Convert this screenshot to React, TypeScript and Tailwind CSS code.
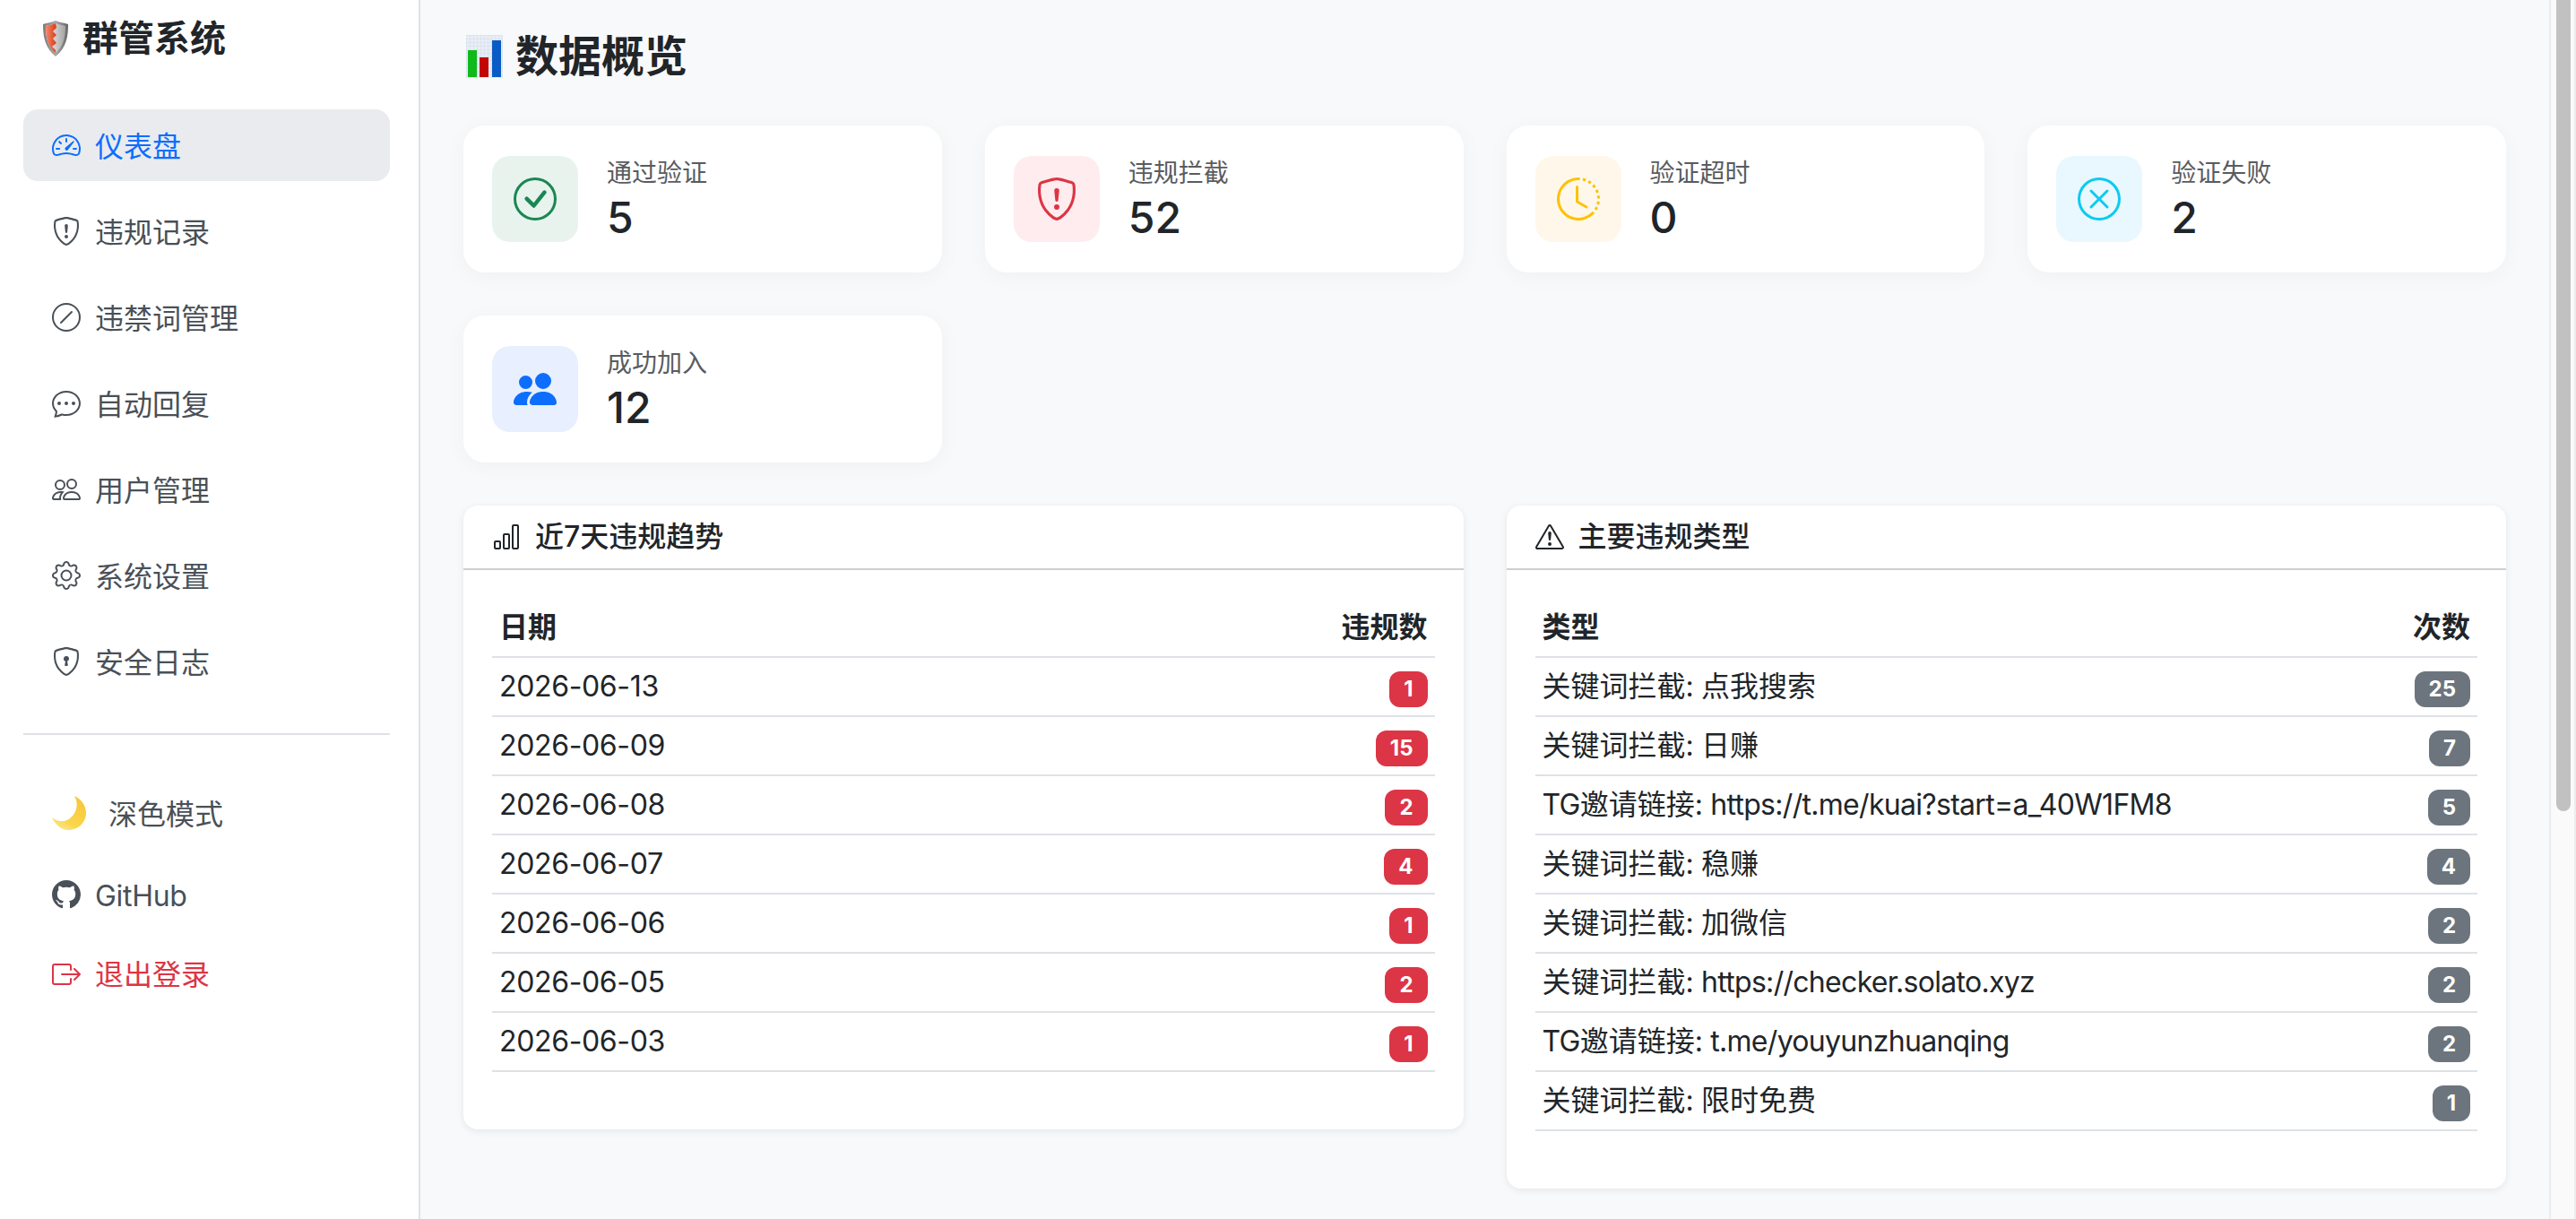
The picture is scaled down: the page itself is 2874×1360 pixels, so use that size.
import type { ReactNode } from "react";
import {
  BsBarChart,
  BsBoxArrowRight,
  BsChatDots,
  BsCheckCircle,
  BsClockHistory,
  BsExclamationTriangle,
  BsGear,
  BsGithub,
  BsPeople,
  BsPeopleFill,
  BsShieldExclamation,
  BsShieldLock,
  BsSlashCircle,
  BsSpeedometer2,
  BsXCircle,
} from "react-icons/bs";

const navItems = [
  { label: "仪表盘", icon: BsSpeedometer2, active: true },
  { label: "违规记录", icon: BsShieldExclamation },
  { label: "违禁词管理", icon: BsSlashCircle },
  { label: "自动回复", icon: BsChatDots },
  { label: "用户管理", icon: BsPeople },
  { label: "系统设置", icon: BsGear },
  { label: "安全日志", icon: BsShieldLock },
];

const stats = [
  { label: "通过验证", value: 5, icon: BsCheckCircle, box: "bg-[#e9f3ee] text-[#198754]" },
  { label: "违规拦截", value: 52, icon: BsShieldExclamation, box: "bg-[#feecee] text-[#dc3545]" },
  { label: "验证超时", value: 0, icon: BsClockHistory, box: "bg-[#fff8ea] text-[#ffc107]" },
  { label: "验证失败", value: 2, icon: BsXCircle, box: "bg-[#e9f8fe] text-[#0dcaf0]" },
  { label: "成功加入", value: 12, icon: BsPeopleFill, box: "bg-[#e8effe] text-[#0d6efd]" },
];

const trend = [
  ["2026-06-13", 1],
  ["2026-06-09", 15],
  ["2026-06-08", 2],
  ["2026-06-07", 4],
  ["2026-06-06", 1],
  ["2026-06-05", 2],
  ["2026-06-03", 1],
] as const;

const topTypes = [
  ["关键词拦截: 点我搜索", 25],
  ["关键词拦截: 日赚", 7],
  ["TG邀请链接: https://t.me/kuai?start=a_40W1FM8", 5],
  ["关键词拦截: 稳赚", 4],
  ["关键词拦截: 加微信", 2],
  ["关键词拦截: https://checker.solato.xyz", 2],
  ["TG邀请链接: t.me/youyunzhuanqing", 2],
  ["关键词拦截: 限时免费", 1],
] as const;

// latin runs sit a little tighter than the CJK around them
const Tight = ({ text }: { text: string }) => (
  <>
    {text.split(/([\x21-\x7e]+)/).map((part, i) =>
      i % 2 ? (
        <span key={i} className={part.startsWith("2026") ? "tracking-[-0.35px]" : "tracking-[-0.7px]"}>
          {part}
        </span>
      ) : (
        part
      ),
    )}
  </>
);

const ShieldEmoji = () => (
  <svg viewBox="0 0 28 40" className="w-[28px] h-[40px] shrink-0">
    <defs>
      <linearGradient id="rim" x1="0" y1="0" x2="1" y2="0">
        <stop offset="0" stopColor="#7d7d7d" />
        <stop offset="0.5" stopColor="#a8a8a8" />
        <stop offset="1" stopColor="#666666" />
      </linearGradient>
      <linearGradient id="metal" x1="0" y1="0" x2="1" y2="0">
        <stop offset="0" stopColor="#f5f5f5" />
        <stop offset="1" stopColor="#a4a4a4" />
      </linearGradient>
      <linearGradient id="paint" x1="0" y1="0" x2="1" y2="0">
        <stop offset="0" stopColor="#f78a6c" />
        <stop offset="1" stopColor="#d93a17" />
      </linearGradient>
    </defs>
    <path d="M14 0C18 2 24 2.5 28 4C28 18 26 30 14 40C2 30 0 18 0 4C4 2.5 10 2 14 0Z" fill="url(#rim)" />
    <path d="M14 3C18 4.500 22 5 25 6C25 18 23 28 14 36C5 28 3 18 3 6C6 5 10 4.500 14 3Z" fill="url(#metal)" />
    <path d="M14 3C11 4.500 6 5 3 6C3 18 5 28 14 36L14 33L10 29L15 25L11 20L15 16L11 12L15 8Z" fill="url(#paint)" />
  </svg>
);

const ChartEmoji = () => (
  <svg viewBox="0 0 41 48" className="w-[41px] h-[48px] shrink-0 ml-[3px]">
    <defs>
      <pattern id="grid" width="4" height="4" patternUnits="userSpaceOnUse">
        <rect width="4" height="4" fill="#e9eef5" />
        <path d="M0 0H4M0 0V4" stroke="#d3dde9" strokeWidth="1" />
      </pattern>
    </defs>
    <rect width="41" height="48" fill="url(#grid)" />
    <rect x="2" y="17" width="10" height="30" fill="#0fbb1a" />
    <rect x="15" y="25" width="10" height="22" fill="#c20505" />
    <rect x="29" y="6" width="10" height="41" fill="#0a5cc4" />
  </svg>
);

const MoonEmoji = () => (
  <svg viewBox="0 0 38 38" className="w-[38px] h-[38px] shrink-0">
    <defs>
      <linearGradient id="moon" x1="0.8" y1="0" x2="0.3" y2="1">
        <stop offset="0" stopColor="#f5c63b" />
        <stop offset="0.75" stopColor="#fbd64a" />
        <stop offset="1" stopColor="#fbe58e" />
      </linearGradient>
    </defs>
    <path d="M25 0C34 4 38 12 38 19C38 30 29 38 18 38C10 38 4 32 0 24C6 29 14 30 20 25C28 19 30 8 25 0Z" fill="url(#moon)" />
  </svg>
);

const Panel = ({ icon, title, children }: { icon: ReactNode; title: string; children: ReactNode }) => (
  <div className="bg-white rounded-2xl shadow-[0_2px_8px_rgba(0,0,0,0.08)] overflow-hidden">
    <div className="flex items-center gap-4 h-[72px] px-8 border-b-2 border-[#cfcfcf] text-[32px] font-medium text-[#212529]">
      {icon}
      <span>{title}</span>
    </div>
    <div className="p-8">{children}</div>
  </div>
);

const CountTable = ({ head, rows, badge }: { head: [string, string]; rows: readonly (readonly [string, number])[]; badge: string }) => (
  <table className="w-full border-collapse mb-8 text-[32px] leading-[48px] text-[#212529]">
    <thead>
      <tr className="border-b-2 border-[#dee2e6]">
        <th className="p-2 text-left font-semibold">{head[0]}</th>
        <th className="p-2 text-right font-semibold">{head[1]}</th>
      </tr>
    </thead>
    <tbody>
      {rows.map(([name, count], i) => (
        <tr key={i} className="border-b-2 border-[#dee2e6]">
          <td className="p-2">
            <Tight text={name} />
          </td>
          <td className="p-2 text-right">
            <span className={`inline-block rounded-xl px-4 py-[8.4px] text-[24px] font-bold leading-none text-white ${badge}`}>
              {count}
            </span>
          </td>
        </tr>
      ))}
    </tbody>
  </table>
);

export default function App() {
  return (
    <div className="flex h-[1360px] overflow-hidden bg-[#f8f9fa] font-['Inter','Noto_Sans_CJK_SC',sans-serif]">
      {/* Sidebar */}
      <aside className="w-[469px] shrink-0 bg-white border-r-2 border-[#dee2e6] px-[26px]">
        <div className="flex items-center gap-4 pl-[22px] pt-[19px] h-[67px] mb-[55px] text-[40px] leading-[48px] font-bold text-[#212529]">
          <ShieldEmoji />
          <span>群管系统</span>
        </div>
        <nav className="flex flex-col gap-4 w-[409px]">
          {navItems.map((item) => (
            <a
              key={item.label}
              className={`flex items-center gap-4 h-[80px] px-8 rounded-2xl text-[32px] ${
                item.active ? "bg-[#e9ebef] text-[#0d6efd]" : "text-[#495057]"
              }`}
            >
              <item.icon className="w-8 h-8 shrink-0" />
              <span className="translate-y-[2px]">{item.label}</span>
            </a>
          ))}
        </nav>
        <div className="w-[409px] h-[2px] bg-[#dee2e6] mt-10" />
        <div className="flex items-center gap-[25px] h-[80px] px-8 mt-[47px] text-[32px] text-[#495057]">
          <MoonEmoji />
          <span className="translate-y-[2px]">深色模式</span>
        </div>
        <div className="flex items-center gap-4 h-[80px] px-8 mt-[11px] text-[32px] text-[#495057]">
          <BsGithub className="w-8 h-8 shrink-0" />
          <span className="translate-y-[2px] tracking-[-0.3px]">GitHub</span>
        </div>
        <div className="flex items-center gap-4 h-[80px] px-8 mt-[9px] text-[32px] text-[#dc3545]">
          <BsBoxArrowRight className="w-8 h-8 shrink-0" />
          <span className="translate-y-px">退出登录</span>
        </div>
      </aside>

      {/* Main */}
      <main className="flex-1 min-w-0 px-12 pt-[34px]">
        <h1 className="flex items-center gap-[14px] mb-12 text-[48px] leading-[58px] font-bold text-[#212529]">
          <ChartEmoji />
          <span>数据概览</span>
        </h1>

        <div className="grid grid-cols-4 gap-12 mb-12">
          {stats.map((s) => (
            <div key={s.label} className="flex items-center gap-8 p-8 bg-white rounded-3xl shadow-[0_4px_24px_rgba(0,0,0,0.04)]">
              <div className={`flex items-center justify-center w-24 h-24 rounded-[20px] ${s.box}`}>
                <s.icon className="w-12 h-12" />
              </div>
              <div>
                <div className="text-[28px] leading-[42px] text-[#595c5f]">{s.label}</div>
                <div className="text-[48px] leading-[58px] font-medium text-[#212529]">{s.value}</div>
              </div>
            </div>
          ))}
        </div>

        <div className="grid grid-cols-2 gap-12 items-start">
          <Panel icon={<BsBarChart className="w-8 h-8" />} title="近7天违规趋势">
            <CountTable head={["日期", "违规数"]} rows={trend} badge="bg-[#dc3545]" />
          </Panel>
          <Panel icon={<BsExclamationTriangle className="w-8 h-8" />} title="主要违规类型">
            <CountTable head={["类型", "次数"]} rows={topTypes} badge="bg-[#6c757d]" />
          </Panel>
        </div>
      </main>

      {/* Scrollbar */}
      <div className="w-[30px] shrink-0 bg-[#fafafa] border-l-2 border-r-2 border-[#ececec] pl-[6px]">
        <div className="w-4 h-[905px] rounded-b-lg bg-[#c1c1c1]" />
      </div>
    </div>
  );
}
